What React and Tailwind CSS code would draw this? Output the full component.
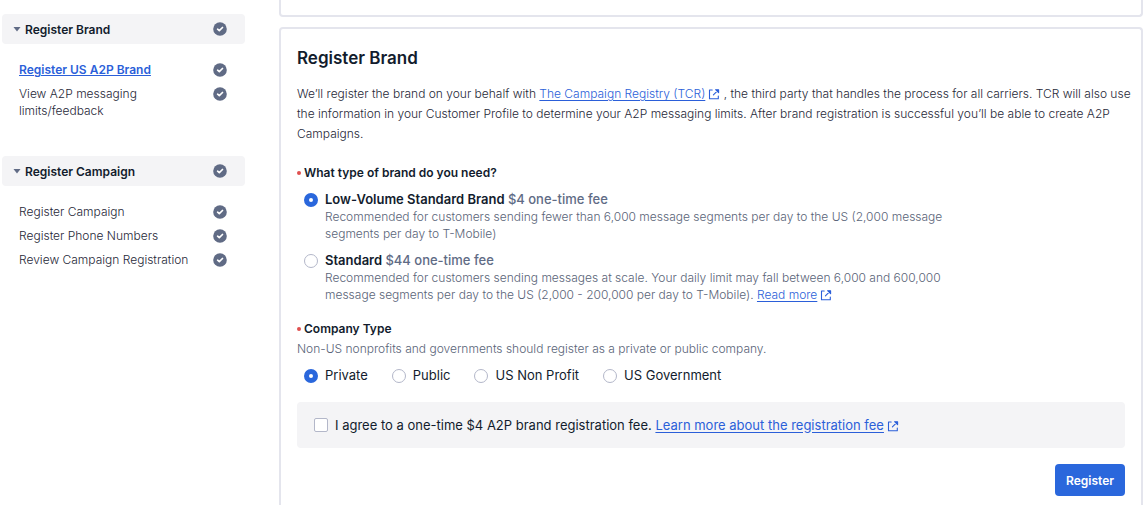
/**
 * Register Brand step
 * - Sidebar: collapsible registration sections with completion marks
 * - Panel: brand type, company type, fee agreement and submit
 */

import { useState } from 'react';

const SECTIONS = [
  {
    title: 'Register Brand',
    items: [
      { label: 'Register US A2P Brand', current: true },
      { label: 'View A2P messaging limits/feedback' },
    ],
  },
  {
    title: 'Register Campaign',
    items: [
      { label: 'Register Campaign' },
      { label: 'Register Phone Numbers' },
      { label: 'Review Campaign Registration' },
    ],
  },
];

const COMPANY_TYPES = ['Private', 'Public', 'US Non Profit', 'US Government'];

function DoneIcon() {
  return (
    <svg viewBox="0 0 14 14" className="size-[14px] shrink-0" aria-hidden="true">
      <circle cx="7" cy="7" r="6.8" fill="#606b85" />
      <path d="M4.6 7.2 6.3 8.7 9.5 5.5" fill="none" stroke="#fff" strokeWidth="1.7" strokeLinecap="round" strokeLinejoin="round" />
    </svg>
  );
}

function ExternalIcon() {
  return (
    <svg
      viewBox="0 0 12 12"
      className="ml-[3px] inline-block size-[12px] align-[-2px]"
      fill="none"
      stroke="currentColor"
      strokeWidth="1.1"
      strokeLinecap="round"
      strokeLinejoin="round"
      aria-hidden="true"
    >
      <path d="M4.2 2H1.5v8.8h8.8V8" />
      <path d="M7.6 1.7h3v3zM10.2 2.1 5.4 6.9" fill="currentColor" />
    </svg>
  );
}

function ExternalLink({ children }) {
  return (
    <a href="#" className="text-[#2b5fd9]">
      <span className="underline underline-offset-2">{children}</span>
      <ExternalIcon />
    </a>
  );
}

function Radio({ id, name, checked, onChange }) {
  return (
    <input
      id={id}
      type="radio"
      name={name}
      checked={checked}
      onChange={onChange}
      className="size-[14px] shrink-0 appearance-none rounded-full border border-[#b3b7c9] bg-white checked:border-5 checked:border-[#2a67dc]"
    />
  );
}

function SidebarSection({ title, items }) {
  const [open, setOpen] = useState(true);

  return (
    <section>
      <button
        type="button"
        aria-expanded={open}
        onClick={() => setOpen(!open)}
        className="flex h-[30px] w-full items-center rounded-sm bg-[#f4f4f6] pr-[18px] pl-[11px] text-left font-semibold text-[#121c2d]"
      >
        <svg viewBox="0 0 8 5" className="mr-1 h-[5px] w-[8px]" fill="#606b85" aria-hidden="true">
          <path d="M.5 0h7L4 4.6z" />
        </svg>
        <span className="flex-1">{title}</span>
        <DoneIcon />
      </button>
      {open && (
        <ul className="mt-[17px] flex flex-col gap-[7px] pr-[18px] pl-[17px]">
          {items.map((item) => (
            <li key={item.label} className="flex items-start gap-4">
              <a
                href="#"
                className={`flex-1 ${item.current ? 'font-semibold text-[#2b5fd9] underline' : ''}`}
              >
                {item.label}
              </a>
              <span className="flex h-[17px] items-center">
                <DoneIcon />
              </span>
            </li>
          ))}
        </ul>
      )}
    </section>
  );
}

function RequiredLegend({ children }) {
  return (
    <legend className="flex items-center gap-[3px] font-semibold text-[#121c2d]">
      <span className="size-[4px] rounded-full bg-[#e0504f]" />
      {children}
    </legend>
  );
}

function BrandOption({ id, title, fee, checked, onChange, children }) {
  return (
    <div className="flex gap-[7px]">
      <span className="flex h-[17px] items-center">
        <Radio id={id} name="brand" checked={checked} onChange={onChange} />
      </span>
      <div>
        <label htmlFor={id} className="block text-[13px] font-semibold text-[#121c2d]">
          {title} <span className="font-medium text-[#606b85]">{fee}</span>
        </label>
        <p className="text-[#5a6478]">{children}</p>
      </div>
    </div>
  );
}

export default function App() {
  const [brand, setBrand] = useState('low');
  const [company, setCompany] = useState('Private');
  const [agreed, setAgreed] = useState(false);

  return (
    <div className="flex h-screen overflow-hidden bg-white font-[Inter,sans-serif] text-[12px] leading-[17px] font-light text-[#1f2838]">
      <nav className="ml-[2px] flex w-[243px] shrink-0 flex-col gap-[37px] pt-[14px]">
        {SECTIONS.map((section) => (
          <SidebarSection key={section.title} {...section} />
        ))}
      </nav>

      <main className="ml-[34px] flex min-w-0 flex-1 flex-col gap-[10px]">
        <div className="h-[17px] shrink-0 rounded-b-sm border-2 border-t-0 border-[#e4e5ed]" />

        <form
          className="grow rounded-t-sm border-2 border-b-0 border-[#e4e5ed] px-[16px] pt-[17px]"
          onSubmit={(e) => e.preventDefault()}
        >
          <h1 className="text-[17px] leading-[24px] font-semibold text-[#121c2d]">Register Brand</h1>
          <p className="mt-[14px] -mr-3 leading-[20px]">
            We’ll register the brand on your behalf with <ExternalLink>The Campaign Registry (TCR)</ExternalLink> , the
            third party that handles the process for all carriers. TCR will also use the information in your Customer
            Profile to determine your A2P messaging limits. After brand registration is successful you’ll be able to
            create A2P Campaigns.
          </p>

          <fieldset className="mt-[20px]">
            <RequiredLegend>What type of brand do you need?</RequiredLegend>
            <div className="mt-[10px] flex max-w-[650px] flex-col gap-[10px] pl-[7px]">
              <BrandOption
                id="brand-low"
                title="Low-Volume Standard Brand"
                fee="$4 one-time fee"
                checked={brand === 'low'}
                onChange={() => setBrand('low')}
              >
                Recommended for customers sending fewer than 6,000 message segments per day to the US (2,000 message
                segments per day to T-Mobile)
              </BrandOption>
              <BrandOption
                id="brand-standard"
                title="Standard"
                fee="$44 one-time fee"
                checked={brand === 'standard'}
                onChange={() => setBrand('standard')}
              >
                Recommended for customers sending messages at scale. Your daily limit may fall between 6,000 and
                600,000 message segments per day to the US (2,000 - 200,000 per day to T-Mobile).{' '}
                <ExternalLink>Read more</ExternalLink>
              </BrandOption>
            </div>
          </fieldset>

          <fieldset className="mt-[17px]">
            <RequiredLegend>Company Type</RequiredLegend>
            <p className="mt-[3px] text-[#5a6478]">
              Non-US nonprofits and governments should register as a private or public company.
            </p>
            <div className="mt-[10px] flex flex-wrap gap-6 pl-[7px] text-[13px] font-normal text-[#121c2d]">
              {COMPANY_TYPES.map((type) => (
                <label key={type} className="flex items-center gap-[7px]">
                  <Radio name="company" checked={company === type} onChange={() => setCompany(type)} />
                  {type}
                </label>
              ))}
            </div>
          </fieldset>

          <div className="mt-[18px] flex h-[46px] items-center gap-[7px] rounded-sm bg-[#f4f4f6] px-[17px] text-[13px] font-normal text-[#121c2d]">
            <input
              id="agree"
              type="checkbox"
              checked={agreed}
              onChange={() => setAgreed(!agreed)}
              className="size-[14px] shrink-0 appearance-none rounded-xs border border-[#b3b7c9] bg-white checked:bg-[#2a67dc]"
            />
            <p>
              <label htmlFor="agree">I agree to a one-time $4 A2P brand registration fee.</label>{' '}
              <ExternalLink>Learn more about the registration fee</ExternalLink>
            </p>
          </div>

          <div className="mt-[16px] flex justify-end">
            <button type="submit" className="h-[32px] rounded-sm bg-[#2a67dc] px-[11px] font-semibold text-white">
              Register
            </button>
          </div>
        </form>
      </main>
    </div>
  );
}
